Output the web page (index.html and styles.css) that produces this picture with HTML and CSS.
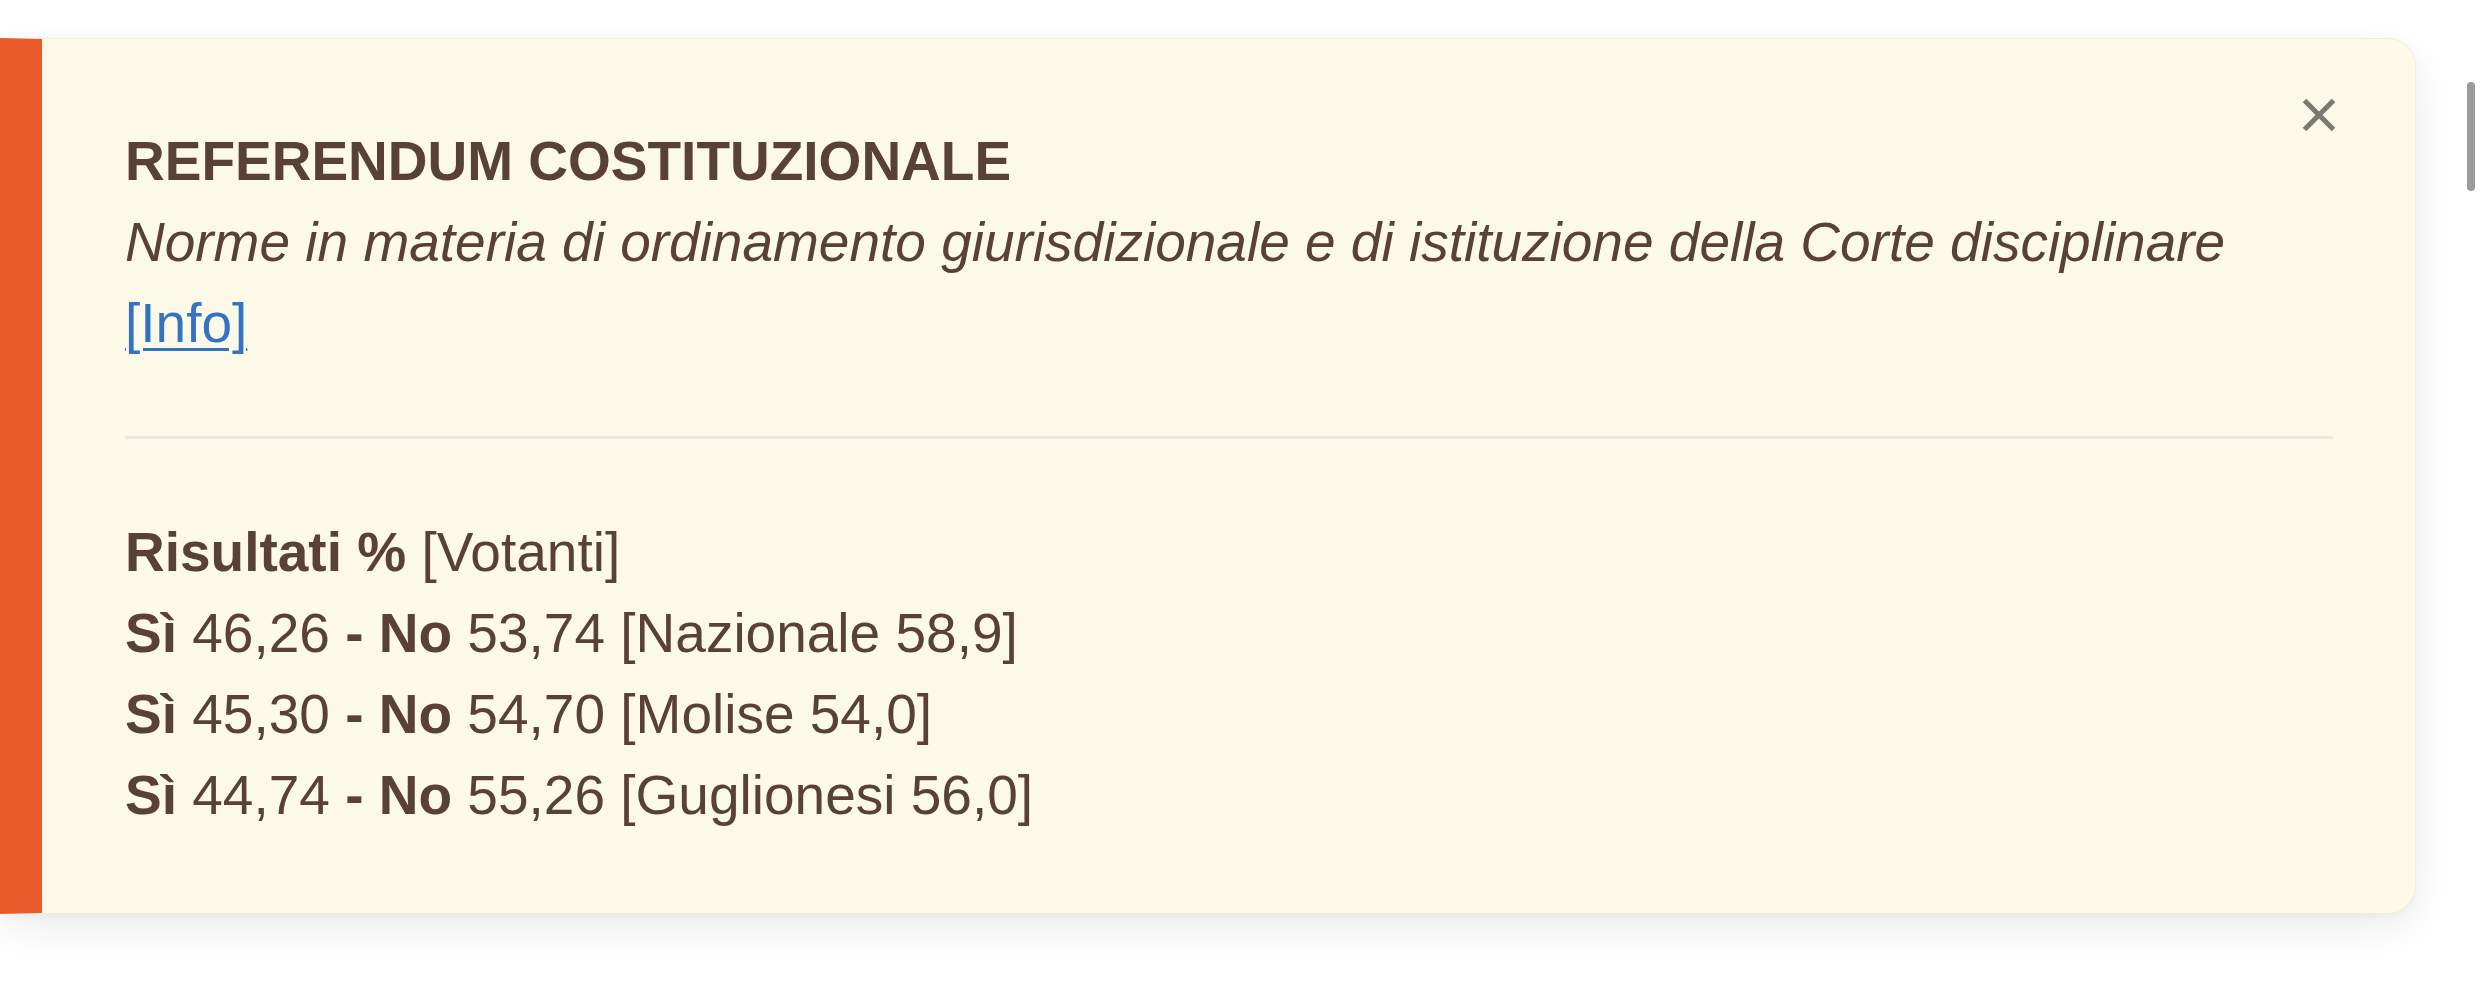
FILE: index.html
```html
<!DOCTYPE html>
<html lang="it">
<head>
<meta charset="utf-8">
<title>Referendum costituzionale</title>
<link rel="stylesheet" href="styles.css">
</head>
<body>
<div class="page">
  <section class="card">
    <button class="close" aria-label="Chiudi">
      <svg viewBox="0 0 34 34" width="34" height="34"><path d="M2.5 2.5 L31.5 31.5 M31.5 2.5 L2.5 31.5" stroke="#7a7a72" stroke-width="5" stroke-linecap="butt" fill="none"/></svg>
    </button>
    <header class="head">
      <div class="title">REFERENDUM COSTITUZIONALE</div>
      <div class="subtitle">Norme in materia di ordinamento giurisdizionale e di istituzione della Corte disciplinare</div>
      <div><a class="info" href="#">[Info]</a></div>
    </header>
    <hr class="sep">
    <div class="results">
      <div><b>Risultati %</b> [Votanti]</div>
      <div><b>Sì</b> 46,26 <b>- No</b> 53,74 [Nazionale 58,9]</div>
      <div><b>Sì</b> 45,30 <b>- No</b> 54,70 [Molise 54,0]</div>
      <div><b>Sì</b> 44,74 <b>- No</b> 55,26 [Guglionesi 56,0]</div>
    </div>
  </section>
  <div class="scrollthumb"></div>
</div>
</body>
</html>
```

FILE: styles.css
```css
html, body {
  margin: 0;
  padding: 0;
  background: #ffffff;
}
body {
  font-family: "Liberation Sans", Arial, Helvetica, sans-serif;
  color: #5a4136;
}
.page {
  padding: 38px 64px 0 0;
  position: relative;
  height: 1006px;
  box-sizing: border-box;
}
.card {
  position: relative;
  background: #fdf9e8;
  border: 1px solid #f6ecd5;
  border-left: 42px solid #e95b2b;
  border-radius: 0 28px 28px 0;
  padding: 82px 82px 77px 83px;
  box-shadow: 0 14px 44px rgba(0, 0, 0, 0.08), 0 2px 10px rgba(0, 0, 0, 0.03);
  font-size: 55px;
  line-height: 81px;
}
.title {
  font-weight: bold;
}
.subtitle {
  font-style: italic;
}
.info {
  color: #3274c1;
  text-decoration: underline;
  text-decoration-thickness: 3px;
  text-underline-offset: 6px;
}
.sep {
  border: 0;
  height: 3px;
  background: #ebe9e1;
  margin: 72px 0 73px 0;
}
.results b {
  font-weight: bold;
}
.close {
  position: absolute;
  top: 59px;
  right: 79px;
  width: 34px;
  height: 34px;
  padding: 0;
  border: 0;
  background: transparent;
  display: flex;
}
.scrollthumb {
  position: absolute;
  left: 2467px;
  top: 82px;
  width: 8px;
  height: 109px;
  border-radius: 4px;
  background: #9b9b9b;
}
```
